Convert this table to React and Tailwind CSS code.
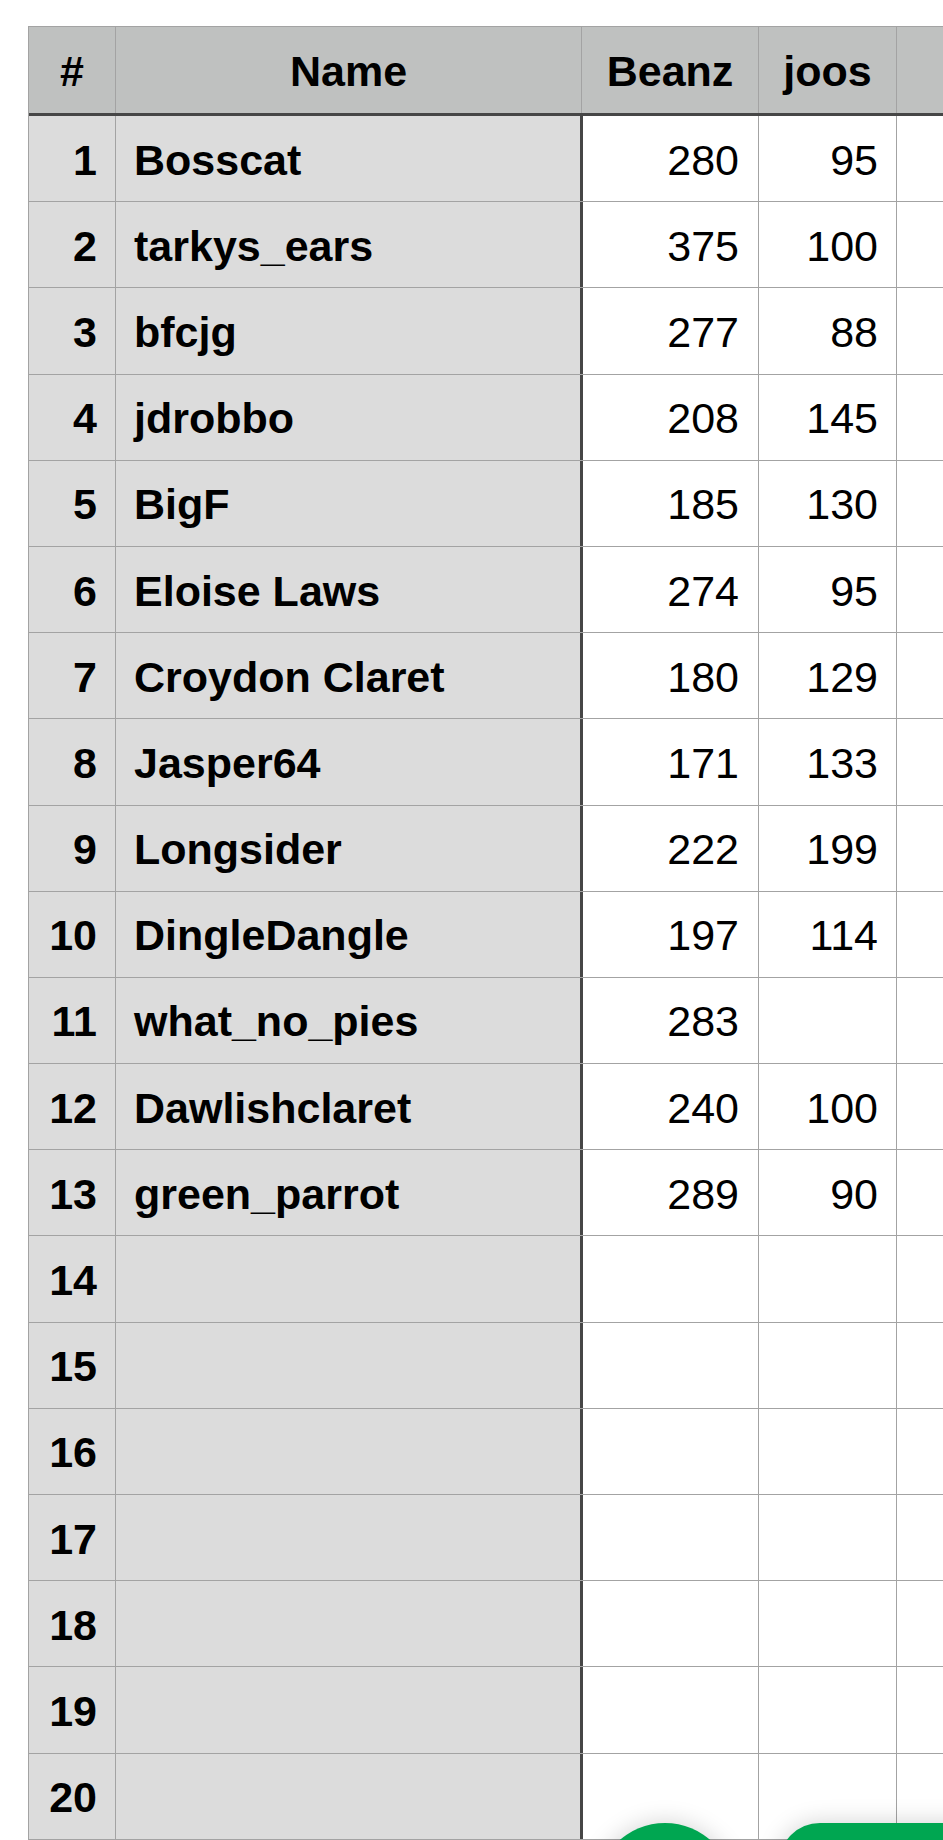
const players = [
  { name: 'Bosscat', beanz: 280, joos: 95 },
  { name: 'tarkys_ears', beanz: 375, joos: 100 },
  { name: 'bfcjg', beanz: 277, joos: 88 },
  { name: 'jdrobbo', beanz: 208, joos: 145 },
  { name: 'BigF', beanz: 185, joos: 130 },
  { name: 'Eloise Laws', beanz: 274, joos: 95 },
  { name: 'Croydon Claret', beanz: 180, joos: 129 },
  { name: 'Jasper64', beanz: 171, joos: 133 },
  { name: 'Longsider', beanz: 222, joos: 199 },
  { name: 'DingleDangle', beanz: 197, joos: 114 },
  { name: 'what_no_pies', beanz: 283, joos: '' },
  { name: 'Dawlishclaret', beanz: 240, joos: 100 },
  { name: 'green_parrot', beanz: 289, joos: 90 },
];

// pad out to 20 rows, plus one more that starts right at the bottom edge
const rows = Array.from({ length: 21 }, (_, i) => ({
  num: i < 20 ? i + 1 : '',
  ...(players[i] || { name: '', beanz: '', joos: '' }),
}));

export default function App() {
  return (
    <div
      className="relative h-[1840px] w-[943px] overflow-hidden bg-white text-black"
      style={{ fontFamily: '"Liberation Sans", Arial, sans-serif' }}
    >
      {/* Sheet */}
      <div className="ml-[28px] mt-[26px] w-[1000px] border-l border-t border-[#a3a3a3] text-[43px] leading-none">

        {/* Header row */}
        <div className="flex h-[89px] border-b-[3px] border-[#464646] bg-[#bfc1c0] font-bold">
          <div className="flex w-[87px] items-center justify-center border-r border-[#a3a3a3] pt-[3px]">#</div>
          <div className="flex w-[466px] items-center justify-center border-r border-[#a3a3a3] pt-[3px]">Name</div>
          <div className="flex w-[177px] items-center justify-center border-r border-[#a3a3a3] pt-[3px]">Beanz</div>
          <div className="flex w-[138px] items-center justify-center border-r border-[#a3a3a3] pt-[3px]">joos</div>
          <div className="flex-1" />
        </div>

        {/* Body rows */}
        {rows.map((r, i) => (
          <div key={i} className="flex h-[86.2px] border-b border-[#a3a3a3]">
            <div className="flex w-[87px] items-center justify-end border-r border-[#a3a3a3] bg-[#dcdcdc] pr-[18px] pt-[3px] font-bold">
              {r.num}
            </div>
            <div className="flex w-[467px] items-center border-r-[3px] border-r-[#464646] bg-[#dcdcdc] pl-[18px] pt-[3px] font-bold">
              {r.name}
            </div>
            <div className="flex w-[176px] items-center justify-end border-r border-[#a3a3a3] pr-[19px] pt-[3px]">
              {r.beanz}
            </div>
            <div className="flex w-[138px] items-center justify-end border-r border-[#a3a3a3] pr-[18px] pt-[3px]">
              {r.joos}
            </div>
            <div className="flex-1" />
          </div>
        ))}
      </div>

      {/* Floating buttons peeking in at the bottom */}
      <div className="absolute left-[596px] top-[1823px] h-[138px] w-[138px] rounded-full bg-[#00a651] shadow-[0_0_24px_rgba(0,0,0,0.18)]" />
      <div className="absolute left-[779px] top-[1823px] h-[138px] w-[320px] rounded-[41px] bg-[#00a651] shadow-[0_0_24px_rgba(0,0,0,0.18)]" />
    </div>
  );
}
